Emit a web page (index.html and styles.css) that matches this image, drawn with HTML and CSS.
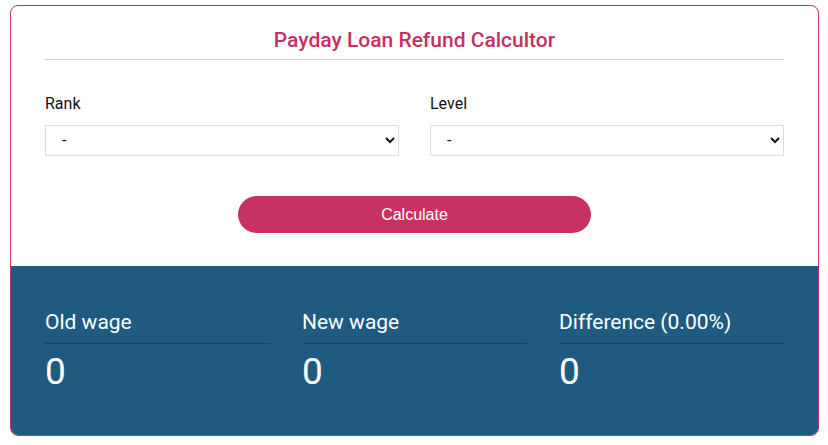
FILE: index.html
```html
<!DOCTYPE html>
<html>
<head>
<meta charset="utf-8">
<link rel="stylesheet" href="styles.css">
</head>
<body>
<div class="card">
  <div class="top">
    <h2 class="title">Payday Loan Refund Calcultor</h2>
    <div class="fields">
      <div class="field">
        <label class="label">Rank</label>
        <select class="select"><option>-</option></select>
      </div>
      <div class="field">
        <label class="label">Level</label>
        <select class="select"><option>-</option></select>
      </div>
    </div>
    <div class="actions">
      <button class="btn">Calculate</button>
    </div>
  </div>
  <div class="results">
    <div class="result">
      <div class="rlabel">Old wage</div>
      <div class="rvalue">0</div>
    </div>
    <div class="result">
      <div class="rlabel">New wage</div>
      <div class="rvalue">0</div>
    </div>
    <div class="result">
      <div class="rlabel">Difference (0.00%)</div>
      <div class="rvalue">0</div>
    </div>
  </div>
</div>
</body>
</html>
```
FILE: styles.css
```css
* { box-sizing: border-box; }
html, body { margin: 0; padding: 0; background: #fff; }
body {
  padding: 5px 9px 10px 10px;
  font-family: Roboto, "Liberation Sans", sans-serif;
  color: #222;
}
.card {
  border: 1px solid #c8325f;
  border-radius: 8px;
  overflow: hidden;
  height: 431px;
  display: flex;
  flex-direction: column;
}
.top {
  padding: 20px 34px 0 34px;
  height: 260px;
}
.title {
  margin: 0;
  font-size: 21px;
  font-weight: 500;
  color: #c5305f;
  text-align: center;
  line-height: 28px;
  padding-bottom: 5px;
  border-bottom: 1px solid #d4d4d4;
}
.fields {
  display: flex;
  gap: 31px;
  margin-top: 34px;
}
.field { flex: 1; display: flex; flex-direction: column; }
.label {
  font-size: 16px;
  line-height: 20px;
  color: #111;
  margin-bottom: 11px;
}
.select {
  height: 31px;
  border: 1px solid #dcdcdc;
  border-radius: 0;
  background: #fff;
  font-family: Roboto, sans-serif;
  font-size: 16px;
  padding: 0 12px;
  color: #111;
}
.actions {
  display: flex;
  justify-content: center;
  margin-top: 40px;
}
.btn {
  width: 353px;
  height: 37px;
  border: 0;
  border-radius: 19px;
  background: #c73263;
  color: #fff;
  font-family: "Liberation Sans", Arial, sans-serif;
  font-size: 16px;
}
.results {
  flex: 1;
  background: #1f5b81;
  display: flex;
  gap: 32px;
  padding: 43px 34px 0 34px;
}
.result { flex: 1; }
.rlabel {
  color: #fff;
  font-size: 21px;
  line-height: 26px;
  padding-bottom: 8px;
  border-bottom: 1px solid #154566;
}
.rvalue {
  color: #fff;
  font-size: 37px;
  line-height: 44px;
  margin-top: 6px;
}
```
